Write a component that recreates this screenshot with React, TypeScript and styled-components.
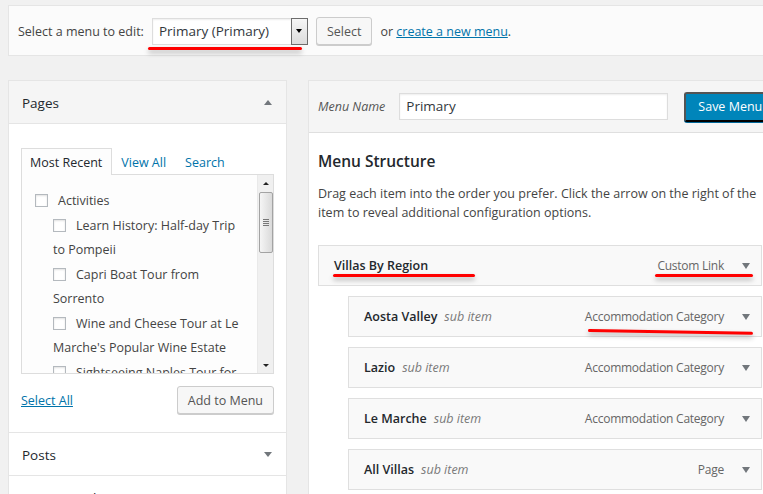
import styled, { createGlobalStyle } from 'styled-components';

const GlobalStyle = createGlobalStyle`
  html, body {
    margin: 0;
    padding: 0;
    background: #f1f1f1;
    overflow: hidden;
  }
  body {
    font-family: "Open Sans", "Noto Sans", sans-serif;
    font-size: 12.5px;
    color: #444;
  }
  * { box-sizing: border-box; }
`;

const Page = styled.div`
  width: 1000px;
  padding: 5px 0 0 8px;
`;

const TopBar = styled.div`
  display: flex;
  align-items: center;
  gap: 8px;
  width: 900px;
  height: 51px;
  padding: 1px 0 0 9px;
  background: #fbfbfb;
  border: 1px solid #e5e5e5;
`;

const Label = styled.span`
  color: #444;
`;

const SelectBox = styled.div`
  position: relative;
  display: flex;
  width: 156px;
  height: 27px;
  background: #fff;
  border: 1px solid #ddd;
  box-shadow: inset 0 1px 2px rgba(0, 0, 0, 0.07);
`;

const SelectValue = styled.span`
  flex: 1;
  padding-left: 6px;
  font-size: 13.5px;
  line-height: 25px;
  color: #32373c;
`;

const SelectArrowBox = styled.span`
  width: 17px;
  margin: -1px -1px -1px 0;
  display: flex;
  align-items: center;
  justify-content: center;
  border: 1px solid #6d6d6d;
  background: linear-gradient(#f6f6f6, #dcdcdc);
`;

const Arrow = styled.span<{ $up?: boolean; $color?: string; $w?: number; $h?: number }>`
  flex: none;
  width: 0;
  height: 0;
  border-left: ${p => p.$w ?? 4}px solid transparent;
  border-right: ${p => p.$w ?? 4}px solid transparent;
  ${p =>
    p.$up
      ? `border-bottom: ${p.$h ?? 5}px solid ${p.$color ?? '#72777c'};`
      : `border-top: ${p.$h ?? 5}px solid ${p.$color ?? '#72777c'};`}
`;

const Marker = styled.span<{ $left: number; $top: number; $width: number; $tilt?: number }>`
  position: absolute;
  left: ${p => p.$left}px;
  top: ${p => p.$top}px;
  width: ${p => p.$width}px;
  height: 3px;
  border-radius: 2px;
  background: #ff0000;
  box-shadow: 0 3px 5px rgba(0, 0, 0, 0.3);
  transform: rotate(${p => p.$tilt ?? 0}deg);
  transform-origin: left center;
`;

const Button = styled.button<{ $primary?: boolean }>`
  height: ${p => (p.$primary ? 30 : 28)}px;
  padding: 0 ${p => (p.$primary ? 12 : 10)}px;
  font-family: inherit;
  font-size: 12.5px;
  white-space: nowrap;
  border-radius: 3px;
  cursor: pointer;
  color: ${p => (p.$primary ? '#fff' : '#555')};
  background: ${p => (p.$primary ? '#0085ba' : '#f7f7f7')};
  border: 1px solid ${p => (p.$primary ? '#0073aa #006799 #006799' : '#ccc')};
  box-shadow: 0 1px 0 ${p => (p.$primary ? '#006799' : '#ccc')};
`;

const Link = styled.a`
  color: #0073aa;
  text-decoration: underline;
`;

const Columns = styled.div`
  display: flex;
  align-items: flex-start;
  gap: 21px;
  margin-top: 24px;
`;

/* ---------- left column ---------- */

const Accordion = styled.div`
  width: 279px;
  flex: none;
  background: #fff;
  border: 1px solid #e5e5e5;
`;

const SectionHeader = styled.div<{ $open?: boolean }>`
  display: flex;
  align-items: center;
  justify-content: space-between;
  height: 43px;
  padding: 1px 14px 0 13px;
  font-size: 13.5px;
  color: #23282d;
  background: ${p => (p.$open ? '#f5f5f5' : '#fff')};
  border-bottom: 1px solid #e5e5e5;
`;

const SectionBody = styled.div`
  padding: 24px 12px 18px;
  border-bottom: 1px solid #e5e5e5;
`;

const Tabs = styled.div`
  display: flex;
  height: 26px;
`;

const Tab = styled.span<{ $active?: boolean }>`
  position: relative;
  z-index: 1;
  display: flex;
  align-items: center;
  padding: 0 9px 0 8px;
  color: ${p => (p.$active ? '#23282d' : '#0073aa')};
  background: ${p => (p.$active ? '#fdfdfd' : 'transparent')};
  border: 1px solid ${p => (p.$active ? '#ddd' : 'transparent')};
  border-bottom: none;
  margin-bottom: -1px;
  height: 27px;
`;

const ListBox = styled.div`
  display: flex;
  height: 200px;
  background: #fdfdfd;
  border: 1px solid #ddd;
`;

const ListContent = styled.ul`
  flex: 1;
  margin: 0;
  padding: 14px 0 0 13px;
  list-style: none;
  overflow: hidden;
  color: #444;
`;

const PageItem = styled.li<{ $depth: number }>`
  margin-left: ${p => p.$depth * 18}px;
  line-height: 24.5px;
  white-space: nowrap;
`;

const Checkbox = styled.span`
  display: inline-block;
  width: 13px;
  height: 13px;
  margin: 0 10px 0 0;
  vertical-align: -2px;
  border: 1px solid #b4b9be;
  background: #fff;
  box-shadow: inset 0 1px 2px rgba(0, 0, 0, 0.12);
`;

const ScrollTrack = styled.div`
  width: 16px;
  flex: none;
  display: flex;
  flex-direction: column;
  align-items: center;
  background: #f0f0f0;
  border-left: 1px solid #e9e9e9;
`;

const ScrollButton = styled.div`
  height: 16px;
  width: 100%;
  display: flex;
  align-items: center;
  justify-content: center;
`;

const ScrollThumb = styled.div`
  width: 14px;
  height: 61px;
  margin-top: 1px;
  display: flex;
  align-items: center;
  justify-content: center;
  border: 1px solid #a3a3a3;
  border-radius: 2px;
  background: linear-gradient(to right, #f5f5f5, #dadada);
`;

const ScrollGrip = styled.span`
  width: 6px;
  height: 7px;
  background: repeating-linear-gradient(#777 0 1px, transparent 1px 2px);
`;

const ScrollSpacer = styled.div`
  flex: 1;
`;

const SectionFooter = styled.div`
  display: flex;
  align-items: center;
  justify-content: space-between;
  margin-top: 12px;
`;

/* ---------- right column ---------- */

const MainPanel = styled.div`
  width: 480px;
  flex: none;
  background: #fff;
  border: 1px solid #e5e5e5;
`;

const MenuHeader = styled.div`
  display: flex;
  align-items: center;
  height: 52px;
  padding-left: 9px;
  background: #f5f5f5;
  border-bottom: 1px solid #dfdfdf;
`;

const NameLabel = styled.span`
  font-style: italic;
  color: #555;
  margin-right: 14px;
`;

const NameInput = styled.div`
  width: 269px;
  height: 27px;
  margin-right: 16px;
  padding-left: 6px;
  font-size: 13.5px;
  line-height: 25px;
  color: #32373c;
  background: #fff;
  border: 1px solid #ddd;
  box-shadow: inset 0 1px 2px rgba(0, 0, 0, 0.07);
`;

const MenuBody = styled.div`
  padding: 18px 0 0 9px;
`;

const Heading = styled.h3`
  margin: 0;
  font-size: 15.5px;
  font-weight: 600;
  line-height: 20px;
  color: #23282d;
`;

const Help = styled.p`
  margin: 13px 0 23px;
  line-height: 19px;
  white-space: nowrap;
`;

const MenuItem = styled.div<{ $depth: number }>`
  position: relative;
  display: flex;
  align-items: center;
  width: ${p => 444 - p.$depth * 30}px;
  height: 41px;
  margin: 0 0 10px ${p => p.$depth * 30}px;
  padding: 0 11px 0 15px;
  background: #f9f9f9;
  border: 1px solid #dfdfdf;
`;

const ItemTitle = styled.span`
  font-weight: 600;
  color: #23282d;
`;

const SubLabel = styled.span`
  margin-left: 7px;
  font-style: italic;
  color: #7a7a7a;
`;

const ItemType = styled.span`
  margin-left: auto;
  margin-right: 18px;
  font-size: 12px;
  letter-spacing: -0.25px;
  color: #666;
`;

type PageEntry = { lines: string[]; depth: number };

const pages: PageEntry[] = [
  { lines: ['Activities'], depth: 0 },
  { lines: ['Learn History: Half-day Trip', 'to Pompeii'], depth: 1 },
  { lines: ['Capri Boat Tour from', 'Sorrento'], depth: 1 },
  { lines: ['Wine and Cheese Tour at Le', "Marche's Popular Wine Estate"], depth: 1 },
  { lines: ['Sightseeing Naples Tour for', 'Families'], depth: 1 },
];

type MarkerSpec = { left: number; top: number; width: number; tilt?: number };

type MenuEntry = {
  title: string;
  type: string;
  depth: number;
  markers?: MarkerSpec[];
};

const menuItems: MenuEntry[] = [
  {
    title: 'Villas By Region',
    type: 'Custom Link',
    depth: 0,
    markers: [
      { left: 14, top: 28, width: 142 },
      { left: 336, top: 28, width: 98 },
    ],
  },
  {
    title: 'Aosta Valley',
    type: 'Accommodation Category',
    depth: 1,
    markers: [{ left: 239, top: 32, width: 165, tilt: 1 }],
  },
  { title: 'Lazio', type: 'Accommodation Category', depth: 1 },
  { title: 'Le Marche', type: 'Accommodation Category', depth: 1 },
  { title: 'All Villas', type: 'Page', depth: 1 },
];

export default function App() {
  return (
    <>
      <GlobalStyle />
      <Page>
        <TopBar>
          <Label>Select a menu to edit:</Label>
          <SelectBox>
            <SelectValue>Primary (Primary)</SelectValue>
            <SelectArrowBox>
              <Arrow $color="#000" $w={3} $h={4} />
            </SelectArrowBox>
            <Marker $left={-5} $top={28} $width={154} />
          </SelectBox>
          <Button>Select</Button>
          <span>
            or <Link href="#">create a new menu</Link>.
          </span>
        </TopBar>

        <Columns>
          <Accordion>
            <SectionHeader $open>
              Pages
              <Arrow $up />
            </SectionHeader>
            <SectionBody>
              <Tabs>
                <Tab $active>Most Recent</Tab>
                <Tab>View All</Tab>
                <Tab>Search</Tab>
              </Tabs>
              <ListBox>
                <ListContent>
                  {pages.map(page => (
                    <PageItem key={page.lines[0]} $depth={page.depth}>
                      <Checkbox />
                      {page.lines[0]}
                      {page.lines.slice(1).map(line => (
                        <div key={line}>{line}</div>
                      ))}
                    </PageItem>
                  ))}
                </ListContent>
                <ScrollTrack>
                  <ScrollButton>
                    <Arrow $up $color="#222" $w={3} $h={3} />
                  </ScrollButton>
                  <ScrollThumb>
                    <ScrollGrip />
                  </ScrollThumb>
                  <ScrollSpacer />
                  <ScrollButton>
                    <Arrow $color="#222" $w={3} $h={3} />
                  </ScrollButton>
                </ScrollTrack>
              </ListBox>
              <SectionFooter>
                <Link href="#">Select All</Link>
                <Button>Add to Menu</Button>
              </SectionFooter>
            </SectionBody>
            <SectionHeader>
              Posts
              <Arrow />
            </SectionHeader>
            <SectionHeader>
              Custom Links
              <Arrow />
            </SectionHeader>
          </Accordion>

          <MainPanel>
            <MenuHeader>
              <NameLabel>Menu Name</NameLabel>
              <NameInput>Primary</NameInput>
              <Button $primary>Save Menu</Button>
            </MenuHeader>
            <MenuBody>
              <Heading>Menu Structure</Heading>
              <Help>
                Drag each item into the order you prefer. Click the arrow on the right of the
                <br />
                item to reveal additional configuration options.
              </Help>
              {menuItems.map(item => (
                <MenuItem key={item.title} $depth={item.depth}>
                  <ItemTitle>{item.title}</ItemTitle>
                  {item.depth > 0 && <SubLabel>sub item</SubLabel>}
                  <ItemType>{item.type}</ItemType>
                  <Arrow $w={4.5} $h={6} />
                  {item.markers?.map(m => (
                    <Marker
                      key={m.left}
                      $left={m.left}
                      $top={m.top}
                      $width={m.width}
                      $tilt={m.tilt}
                    />
                  ))}
                </MenuItem>
              ))}
            </MenuBody>
          </MainPanel>
        </Columns>
      </Page>
    </>
  );
}
